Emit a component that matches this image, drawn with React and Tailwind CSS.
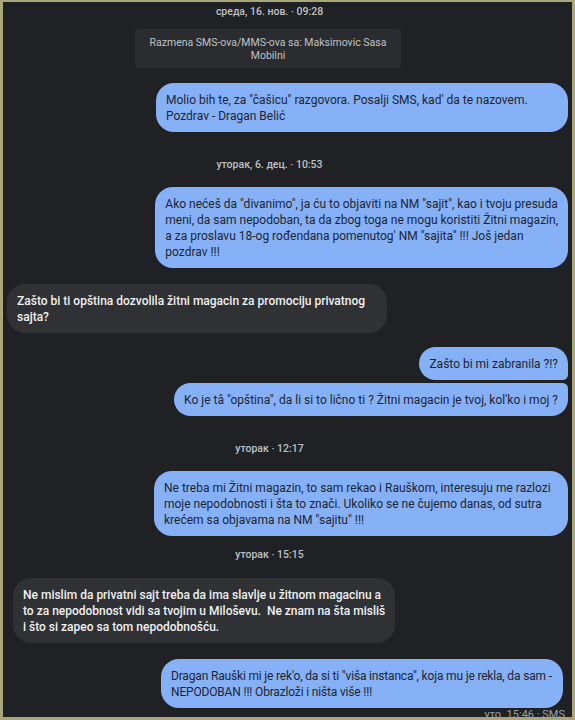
import React from "react";

const DateLabel = ({ children, className = "" }) => (
  <div className={`mr-[36px] text-center text-[10.5px] leading-[14px] font-medium text-[#bdc1c6] ${className}`}>
    {children}
  </div>
);

const Lines = ({ lines }) =>
  lines.map((l, i) => (
    <React.Fragment key={i}>
      {l}
      {i < lines.length - 1 && <br />}
    </React.Fragment>
  ));

const Sent = ({ lines, className = "" }) => (
  <div
    className={`self-end whitespace-nowrap bg-[#86b1f6] px-[10px] py-[8.5px] text-[12px] leading-4 text-[#1d2533] ${className}`}
  >
    <Lines lines={lines} />
  </div>
);

const Received = ({ lines, className = "" }) => (
  <div
    className={`self-start whitespace-nowrap rounded-[18px] bg-[#303134] px-[10px] py-[8.5px] text-[12px] leading-4 font-medium text-[#eef0f2] ${className}`}
  >
    <Lines lines={lines} />
  </div>
);

export default function App() {
  return (
    <div className="h-[720px] w-[575px] overflow-hidden border-[3px] border-t-2 border-[#aaa67c] bg-[#202124] font-['Roboto','Noto_Sans',sans-serif]">
      <div className="flex flex-col">
        <DateLabel className="mt-[3px]">среда, 16. нов. · 09:28</DateLabel>

        <div className="mt-[10px] ml-[132px] flex h-[39px] w-[266px] flex-col items-center justify-center whitespace-nowrap rounded-[3px] bg-[#2b2c2f] text-[10.5px] leading-[13px] text-[#bfc2c6]">
          <span>Razmena SMS-ova/MMS-ova sa: Maksimovic Sasa</span>
          <span>Mobilni</span>
        </div>

        <Sent
          className="mt-[15px] mr-[4px] min-w-[412px] rounded-[18px]"
          lines={[
            'Molio bih te, za "čašicu" razgovora. Posalji SMS, kad\' da te nazovem.',
            "Pozdrav - Dragan Belić",
          ]}
        />

        <DateLabel className="mt-[26px]">уторак, 6. дец. · 10:53</DateLabel>

        <Sent
          className="mt-[15px] mr-[4px] min-w-[412px] rounded-[18px]"
          lines={[
            'Ako nećeš da "divanimo", ja ću to objaviti na NM "sajit", kao i tvoju presuda',
            "meni, da sam nepodoban, ta da zbog toga ne mogu koristiti Žitni magazin,",
            'a za proslavu 18-og rođendana pomenutog\' NM "sajita" !!! Još jedan',
            "pozdrav !!!",
          ]}
        />

        <Received
          className="mt-[16px] ml-[4px] min-w-[380px]"
          lines={[
            "Zašto bi ti opština dozvolila žitni magacin za promociju privatnog",
            "sajta?",
          ]}
        />

        <Sent
          className="mt-[14px] mr-[4px] rounded-[18px] rounded-br-[6px]"
          lines={["Zašto bi mi zabranila ?!?"]}
        />
        <Sent
          className="mt-[3px] mr-[4px] rounded-[18px] rounded-tr-[6px]"
          lines={['Ko je tâ "opština", da li si to lično ti ? Žitni magacin je tvoj, kol\'ko i moj ?']}
        />

        <DateLabel className="mt-[26px]">уторак · 12:17</DateLabel>

        <Sent
          className="mt-[15px] mr-[4px] min-w-[414px] rounded-[18px]"
          lines={[
            "Ne treba mi Žitni magazin, to sam rekao i Rauškom, interesuju me razlozi",
            "moje nepodobnosti i šta to znači. Ukoliko se ne čujemo danas, od sutra",
            'krećem sa objavama na NM "sajitu" !!!',
          ]}
        />

        <DateLabel className="mt-[12px]">уторак · 15:15</DateLabel>

        <Received
          className="mt-[16px] ml-[10px] min-w-[381px]"
          lines={[
            "Ne mislim da privatni sajt treba da ima slavlje u žitnom magacinu a",
            "to za nepodobnost vidi sa tvojim u Miloševu.\u00a0 Ne znam na šta misliš",
            "i što si zapeo sa tom nepodobnošću.",
          ]}
        />

        <Sent
          className="mt-[16px] mr-[9px] min-w-[402px] rounded-[18px] tracking-[-0.17px]"
          lines={[
            'Dragan Rauški mi je rek\'o, da si ti "viša instanca", koja mu je rekla, da sam -',
            "NEPODOBAN !!! Obrazloži i ništa više !!!",
          ]}
        />

        <div className="mr-[7px] self-end text-[11px] leading-[13px] text-[#9aa0a6]">
          уто. 15:46 · SMS
        </div>
      </div>
    </div>
  );
}
